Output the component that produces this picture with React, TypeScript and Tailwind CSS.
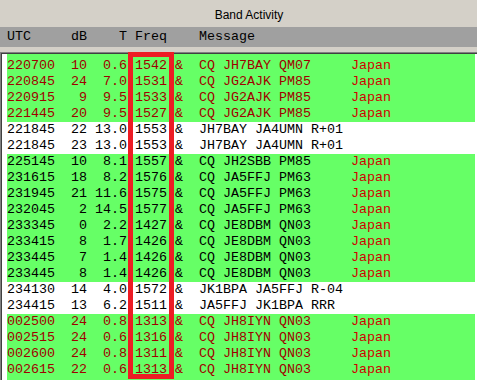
import React from 'react';

type Kind = 'red' | 'plain' | 'black';

interface Decode {
  utc: string;
  db: number;
  dt: string;
  freq: number;
  msg: string;
  country?: string;
  kind: Kind;
}

const decodes: Decode[] = [
  { utc: '220700', db: 10, dt: '0.6', freq: 1542, msg: 'CQ JH7BAY QM07', country: 'Japan', kind: 'red' },
  { utc: '220845', db: 24, dt: '7.0', freq: 1531, msg: 'CQ JG2AJK PM85', country: 'Japan', kind: 'red' },
  { utc: '220915', db: 9, dt: '9.5', freq: 1533, msg: 'CQ JG2AJK PM85', country: 'Japan', kind: 'red' },
  { utc: '221445', db: 20, dt: '9.5', freq: 1527, msg: 'CQ JG2AJK PM85', country: 'Japan', kind: 'red' },
  { utc: '221845', db: 22, dt: '13.0', freq: 1553, msg: 'JH7BAY JA4UMN R+01', kind: 'plain' },
  { utc: '221845', db: 23, dt: '13.0', freq: 1553, msg: 'JH7BAY JA4UMN R+01', kind: 'plain' },
  { utc: '225145', db: 10, dt: '8.1', freq: 1557, msg: 'CQ JH2SBB PM85', country: 'Japan', kind: 'black' },
  { utc: '231615', db: 18, dt: '8.2', freq: 1576, msg: 'CQ JA5FFJ PM63', country: 'Japan', kind: 'black' },
  { utc: '231945', db: 21, dt: '11.6', freq: 1575, msg: 'CQ JA5FFJ PM63', country: 'Japan', kind: 'black' },
  { utc: '232045', db: 2, dt: '14.5', freq: 1577, msg: 'CQ JA5FFJ PM63', country: 'Japan', kind: 'black' },
  { utc: '233345', db: 0, dt: '2.2', freq: 1427, msg: 'CQ JE8DBM QN03', country: 'Japan', kind: 'black' },
  { utc: '233415', db: 8, dt: '1.7', freq: 1426, msg: 'CQ JE8DBM QN03', country: 'Japan', kind: 'black' },
  { utc: '233445', db: 7, dt: '1.4', freq: 1426, msg: 'CQ JE8DBM QN03', country: 'Japan', kind: 'black' },
  { utc: '233445', db: 8, dt: '1.4', freq: 1426, msg: 'CQ JE8DBM QN03', country: 'Japan', kind: 'black' },
  { utc: '234130', db: 14, dt: '4.0', freq: 1572, msg: 'JK1BPA JA5FFJ R-04', kind: 'plain' },
  { utc: '234415', db: 13, dt: '6.2', freq: 1511, msg: 'JA5FFJ JK1BPA RRR', kind: 'plain' },
  { utc: '002500', db: 24, dt: '0.8', freq: 1313, msg: 'CQ JH8IYN QN03', country: 'Japan', kind: 'red' },
  { utc: '002515', db: 24, dt: '0.6', freq: 1316, msg: 'CQ JH8IYN QN03', country: 'Japan', kind: 'red' },
  { utc: '002600', db: 24, dt: '0.8', freq: 1311, msg: 'CQ JH8IYN QN03', country: 'Japan', kind: 'red' },
  { utc: '002615', db: 22, dt: '0.6', freq: 1313, msg: 'CQ JH8IYN QN03', country: 'Japan', kind: 'red' },
];

const mono = { fontFamily: '"Liberation Mono", "Courier New", monospace' };

const line = (d: Decode) =>
  d.utc + String(d.db).padStart(4) + d.dt.padStart(5) + ' ' + d.freq + ' &  ' + (d.country ? d.msg.padEnd(19) : d.msg);

const App: React.FC = () => {
  return (
    <div className="relative w-[477px] h-[380px] overflow-hidden bg-[#d4d0c8]">
      <div
        className="h-[27px] flex items-center justify-center pl-[21px] pt-[2px] text-[12px] text-black"
        style={{ fontFamily: '"Liberation Sans", Arial, sans-serif' }}
      >
        Band Activity
      </div>

      {/* column header */}
      <div className="h-[20px] bg-[#a0a0a0] flex items-center pl-[7px] text-[13.33px] text-black whitespace-pre" style={mono}>
        {'UTC     dB    T Freq    Message'}
      </div>

      <div className="h-[5px]" />

      <div className="border-t border-l border-[#808080]">
        <div className="border-t border-l border-[#404040] bg-white h-[400px] pl-[5px] pr-[2px]">
          {decodes.map((d, i) => {
            const bg = d.kind === 'plain' ? 'bg-white' : 'bg-[#66ff66]';
            const fg = d.kind === 'red' ? 'text-[#a00000]' : 'text-black';
            return (
              <div
                key={i}
                className={`${bg} ${fg} ${i === 0 ? 'pt-[4px]' : ''} leading-[16px] text-[13.33px] whitespace-pre`}
                style={mono}
              >
                {line(d)}
                {d.country && <span className="text-[#d00000]">{d.country}</span>}
              </div>
            );
          })}
          <div className="bg-[#66ff66] h-[16px]" />
        </div>
      </div>

      {/* highlight around the Freq column */}
      <div className="absolute left-[128px] top-[52px] w-[46px] h-[327px] border-[5px] border-[#ed1c24] pointer-events-none" />
    </div>
  );
};

export default App;
